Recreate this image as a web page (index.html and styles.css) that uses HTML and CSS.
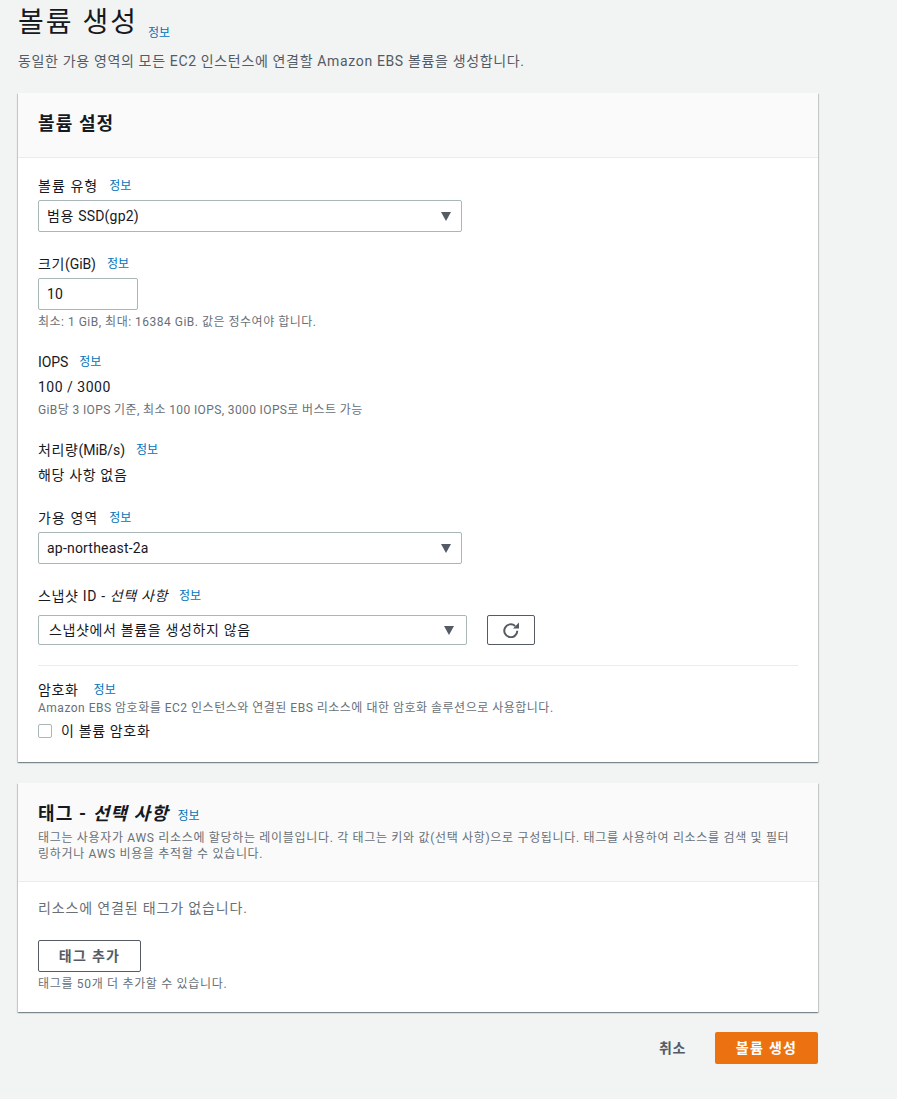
FILE: index.html
```html
<!DOCTYPE html>
<html lang="ko">
<head>
    <meta charset="UTF-8">
    <title>볼륨 생성</title>
    <link rel="stylesheet" href="styles.css">
</head>
<body>
    <div class="page">
        <div class="page-title">
            <h1>볼륨 생성</h1>
            <a class="info info-top" href="#">정보</a>
        </div>
        <p class="page-desc">동일한 가용 영역의 모든 EC2 인스턴스에 연결할 Amazon EBS 볼륨을 생성합니다.</p>

        <!-- Volume settings -->
        <section class="card">
            <div class="card-header">
                <h2>볼륨 설정</h2>
            </div>
            <div class="card-body">
                <div class="field field-type">
                    <div class="label"><span>볼륨 유형</span><a class="info" href="#">정보</a></div>
                    <div class="select select-wide">
                        <span>범용 <span class="en">SSD(gp2)</span></span>
                        <i class="caret"></i>
                    </div>
                </div>

                <div class="field field-size">
                    <div class="label"><span>크기<span class="en">(GiB)</span></span><a class="info" href="#">정보</a></div>
                    <div class="input">10</div>
                    <p class="hint">최소: 1 GiB, 최대: 16384 GiB. 값은 정수여야 합니다.</p>
                </div>

                <div class="field field-iops">
                    <div class="label"><span class="en">IOPS</span><a class="info" href="#">정보</a></div>
                    <div class="value en">100 / 3000</div>
                    <p class="hint hint-tight">GiB당 3 IOPS 기준, 최소 100 IOPS, 3000 IOPS로 버스트 가능</p>
                </div>

                <div class="field field-throughput">
                    <div class="label"><span>처리량<span class="en">(MiB/s)</span></span><a class="info" href="#">정보</a></div>
                    <div class="value">해당 사항 없음</div>
                </div>

                <div class="field field-zone">
                    <div class="label"><span>가용 영역</span><a class="info" href="#">정보</a></div>
                    <div class="select select-wide">
                        <span class="en">ap-northeast-2a</span>
                        <i class="caret"></i>
                    </div>
                </div>

                <div class="field field-snapshot">
                    <div class="label"><span>스냅샷 ID - <em>선택 사항</em></span><a class="info" href="#">정보</a></div>
                    <div class="snapshot-row">
                        <div class="select select-snapshot">
                            <span>스냅샷에서 볼륨을 생성하지 않음</span>
                            <i class="caret"></i>
                        </div>
                        <button class="refresh" type="button" aria-label="새로 고침">
                            <svg width="16" height="16" viewBox="0 0 16 16" fill="none">
                                <path d="M14.3 8.8a6.5 6.5 0 1 1-2.2-4.9" stroke="#545b64" stroke-width="2"/>
                                <path d="M16 .5v6h-6z" fill="#545b64"/>
                            </svg>
                        </button>
                    </div>
                </div>

                <div class="encrypt">
                    <div class="label"><span>암호화</span><a class="info" href="#">정보</a></div>
                    <p class="hint">Amazon EBS 암호화를 EC2 인스턴스와 연결된 EBS 리소스에 대한 암호화 솔루션으로 사용합니다.</p>
                    <label class="check"><i class="box"></i><span>이 볼륨 암호화</span></label>
                </div>
            </div>
        </section>

        <!-- Tags -->
        <section class="card card-tags">
            <div class="card-header tags-header">
                <h2>태그 - <em>선택 사항</em> <a class="info" href="#">정보</a></h2>
                <p class="hint">태그는 사용자가 AWS 리소스에 할당하는 레이블입니다. 각 태그는 키와 값(선택 사항)으로 구성됩니다. 태그를 사용하여 리소스를 검색 및 필터링하거나 AWS 비용을 추적할 수 있습니다.</p>
            </div>
            <div class="tags-body">
                <p class="empty">리소스에 연결된 태그가 없습니다.</p>
                <button class="btn" type="button">태그 추가</button>
                <p class="hint">태그를 50개 더 추가할 수 있습니다.</p>
            </div>
        </section>

        <div class="actions">
            <a class="cancel" href="#">취소</a>
            <button class="btn-primary" type="button">볼륨 생성</button>
        </div>
    </div>
</body>
</html>
```

FILE: styles.css
```css
* {
    box-sizing: border-box;
}

body {
    margin: 0;
    background-color: #f2f3f3;
    color: #16191f;
    font-family: 'Roboto', 'Noto Sans CJK KR', sans-serif;
    font-size: 14px;
    line-height: 20px;
    letter-spacing: 0.65px;
}

.page {
    width: 800px;
    margin-left: 18px;
}

p {
    margin: 0;
}

/* Latin runs sit tighter than the hangul around them */
.en {
    letter-spacing: 0.2px;
}

.label .en {
    letter-spacing: -0.1px;
}

.value.en {
    letter-spacing: 0.5px;
}

.page-title {
    display: flex;
    align-items: flex-end;
    height: 44px;
}

h1 {
    margin: 0;
    padding-top: 1px;
    font-size: 28px;
    font-weight: 400;
    line-height: 43px;
    letter-spacing: 2px;
}

.info {
    color: #0073bb;
    font-size: 12px;
    letter-spacing: 0;
    text-decoration: none;
    margin-left: 11px;
}

.info-top {
    line-height: 20px;
    margin-left: 10px;
    margin-bottom: 1px;
}

.page-desc {
    color: #545b64;
    margin-top: 7px;
    margin-bottom: 22px;
}

.card {
    background: #fff;
    box-shadow: 0 1px 1px 0 rgba(0, 28, 36, 0.3), 1px 1px 1px 0 rgba(0, 28, 36, 0.15), -1px 1px 1px 0 rgba(0, 28, 36, 0.15);
    height: 669px;
}

.card-header {
    background: #fafafa;
    border-bottom: 1px solid #eaeded;
    height: 65px;
    padding: 20px 20px;
}

h2 {
    margin: 0;
    font-size: 18px;
    font-weight: 700;
    line-height: 22px;
    letter-spacing: 1.1px;
}

.card-body {
    padding: 18px 20px 0;
}

.label {
    display: flex;
    height: 20px;
    align-items: center;
}

.label em,
h2 em {
    font-style: italic;
}

.field-type .label,
.field-zone .label {
    letter-spacing: 1.05px;
}

.encrypt .info {
    margin-left: 15px;
}

.hint {
    color: #687078;
    font-size: 12px;
    line-height: 16px;
    letter-spacing: 0.5px;
}

.hint-tight {
    letter-spacing: 0.38px;
}

.field-type {
    height: 78px;
}

.field-size {
    height: 98px;
}

.field-iops {
    height: 88px;
}

.field-throughput {
    height: 68px;
}

.field-zone {
    height: 78px;
}

.field .label {
    margin-bottom: 4px;
}

.select {
    display: flex;
    justify-content: space-between;
    align-items: center;
    height: 32px;
    background: #fff;
    border: 1px solid #aab7b8;
    border-radius: 2px;
    padding: 0 10px 0 8px;
}

.select-wide {
    width: 424px;
}

.select-snapshot {
    width: 429px;
    height: 30px;
    padding: 0 12px 0 10px;
}

.caret {
    width: 0;
    height: 0;
    border-left: 5.5px solid transparent;
    border-right: 5.5px solid transparent;
    border-top: 9px solid #545b64;
}

.input {
    width: 100px;
    height: 32px;
    border: 1px solid #aab7b8;
    border-radius: 2px;
    padding: 5px 8px;
    letter-spacing: 0.1px;
}

.field-size .hint {
    margin-top: 4px;
}

.value {
    height: 20px;
    margin-top: 5px;
    margin-bottom: 5px;
}

.snapshot-row {
    display: flex;
    gap: 20px;
    margin-top: 9px;
}

.refresh {
    width: 48px;
    height: 30px;
    display: flex;
    align-items: center;
    justify-content: center;
    background: #fff;
    border: 1px solid #545b64;
    border-radius: 2px;
    padding: 0;
}

.encrypt {
    border-top: 1px solid #eaeded;
    margin-top: 20px;
    padding-top: 14px;
}

.check {
    display: flex;
    align-items: center;
    gap: 9px;
    margin-top: 5px;
}

.box {
    width: 14px;
    height: 14px;
    border: 1px solid #aab7b8;
    border-radius: 2px;
    background: #fff;
}

.card-tags {
    margin-top: 21px;
    height: 229px;
}

.tags-header {
    height: 99px;
    padding: 20px 20px;
}

.tags-header .hint {
    margin-top: 3px;
    letter-spacing: 0.68px;
}

.tags-header .info {
    margin-left: 3px;
    font-weight: 400;
}

.tags-body {
    padding: 16px 20px;
}

.empty {
    color: #687078;
    letter-spacing: 0.85px;
}

.btn {
    display: block;
    width: 103px;
    height: 32px;
    margin-top: 22px;
    background: #fff;
    border: 1px solid #545b64;
    border-radius: 2px;
    color: #545b64;
    font: inherit;
    font-weight: 700;
    letter-spacing: 1.3px;
    padding: 0;
}

.tags-body .hint {
    margin-top: 4px;
    letter-spacing: 0.68px;
}

.actions {
    display: flex;
    justify-content: flex-end;
    align-items: center;
    margin-top: 20px;
}

.cancel {
    color: #545b64;
    font-weight: 700;
    text-decoration: none;
    margin-right: 29px;
}

.btn-primary {
    width: 103px;
    height: 32px;
    background: #ec7211;
    border: none;
    border-radius: 2px;
    color: #fff;
    font: inherit;
    font-weight: 700;
    letter-spacing: 1.3px;
    padding: 0;
}
```
